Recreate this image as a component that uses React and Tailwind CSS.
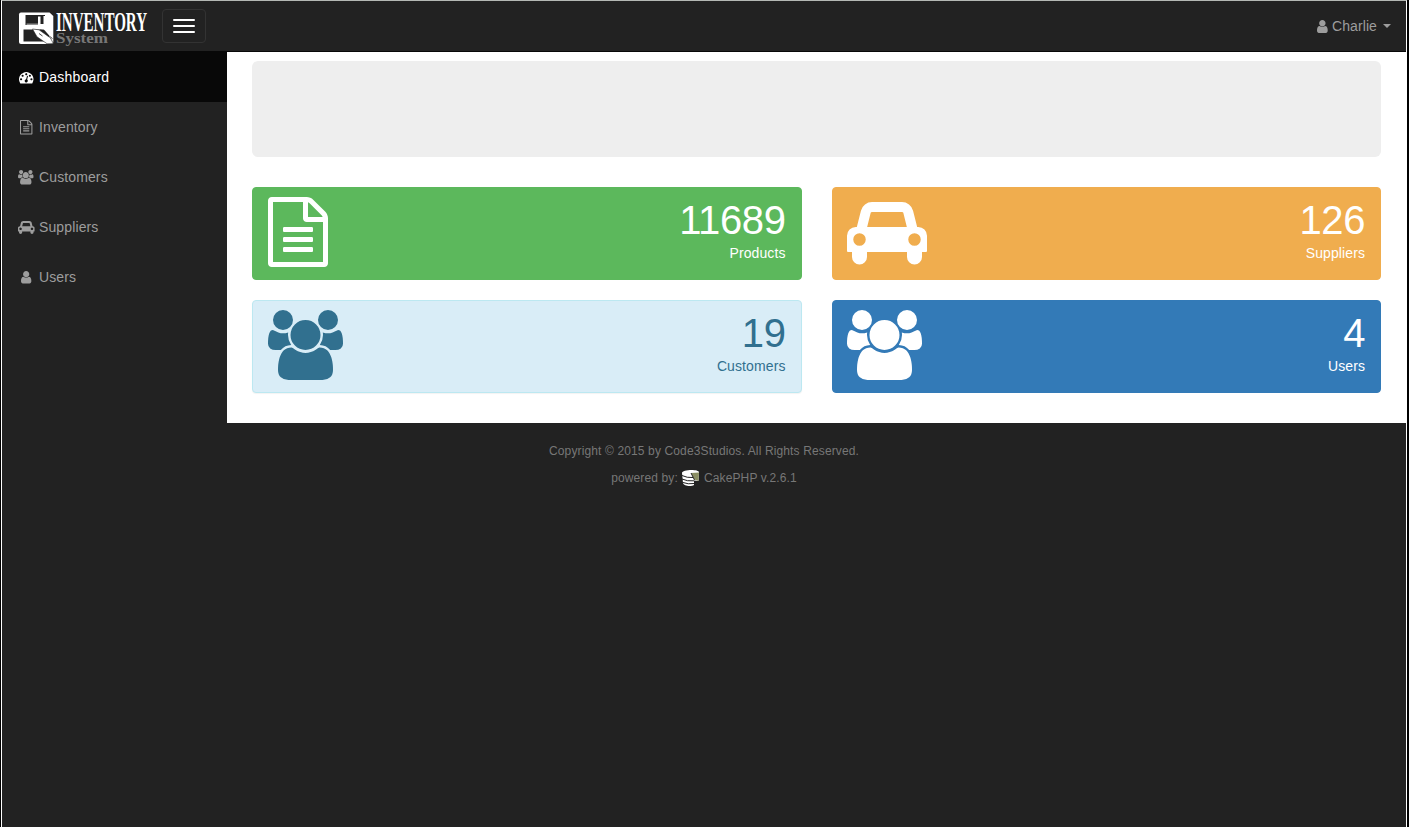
const ICONS = {
  tachometer: {
    w: 1792,
    d: "M384 1152q0-53-37.5-90.5t-90.5-37.5-90.5 37.5-37.5 90.5 37.5 90.5 90.5 37.5 90.5-37.5 37.5-90.5zm192-448q0-53-37.5-90.5t-90.5-37.5-90.5 37.5-37.5 90.5 37.5 90.5 90.5 37.5 90.5-37.5 37.5-90.5zm428 481l101-382q6-26-7.5-48.5t-38.5-29.5-48 6.5-30 39.5l-101 382q-60 5-107 43.5t-63 98.5q-20 77 20 146t117 89 146-20 89-117q16-60-6-117t-72-91zm660-33q0-53-37.5-90.5t-90.5-37.5-90.5 37.5-37.5 90.5 37.5 90.5 90.5 37.5 90.5-37.5 37.5-90.5zm-640-640q0-53-37.5-90.5t-90.5-37.5-90.5 37.5-37.5 90.5 37.5 90.5 90.5 37.5 90.5-37.5 37.5-90.5zm448 192q0-53-37.5-90.5t-90.5-37.5-90.5 37.5-37.5 90.5 37.5 90.5 90.5 37.5 90.5-37.5 37.5-90.5zm320 448q0 261-141 483-19 29-54 29h-1402q-35 0-54-29-141-221-141-483 0-182 71-348t191-286 286-191 348-71 348 71 286 191 191 286 71 348z",
  },
  file: {
    w: 1536,
    d: "M1468 380q28 28 48 76t20 88v1152q0 40-28 68t-68 28h-1344q-40 0-68-28t-28-68v-1600q0-40 28-68t68-28h896q40 0 88 20t76 48zm-444-244v376h376q-10-29-22-41l-313-313q-12-12-41-22zm384 1528v-1024h-416q-40 0-68-28t-28-68v-416h-768v1536h1280zm-1024-864q0-14 9-23t23-9h704q14 0 23 9t9 23v64q0 14-9 23t-23 9h-704q-14 0-23-9t-9-23v-64zm736 224q14 0 23 9t9 23v64q0 14-9 23t-23 9h-704q-14 0-23-9t-9-23v-64q0-14 9-23t23-9h704zm0 256q14 0 23 9t9 23v64q0 14-9 23t-23 9h-704q-14 0-23-9t-9-23v-64q0-14 9-23t23-9h704z",
  },
  users: {
    w: 1920,
    d: "M593 896q-162 5-265 128h-134q-82 0-138-40.5t-56-118.5q0-353 124-353 6 0 43.5 21t97.5 42.5 119 21.5q67 0 133-23-5 37-5 66 0 139 81 256zm1071 637q0 120-73 189.5t-194 69.5h-874q-121 0-194-69.5t-73-189.5q0-53 3.5-103.5t14-109 26.5-108.5 43-97.5 62-81 85.5-53.5 111.5-20q10 0 43 21.5t73 48 107 48 135 21.5 135-21.5 107-48 73-48 43-21.5q61 0 111.5 20t85.5 53.5 62 81 43 97.5 26.5 108.5 14 109 3.5 103.5zm-1024-1277q0 106-75 181t-181 75-181-75-75-181 75-181 181-75 181 75 75 181zm704 384q0 159-112.5 271.5t-271.5 112.5-271.5-112.5-112.5-271.5 112.5-271.5 271.5-112.5 271.5 112.5 112.5 271.5zm576 225q0 78-56 118.5t-138 40.5h-134q-103-123-265-128 81-117 81-256 0-29-5-66 66 23 133 23 59 0 119-21.5t97.5-42.5 43.5-21q124 0 124 353zm-128-609q0 106-75 181t-181 75-181-75-75-181 75-181 181-75 181 75 75 181z",
  },
  car: {
    w: 2048,
    d: "M480 1088q0-66-47-113t-113-47-113 47-47 113 47 113 113 47 113-47 47-113zm36-320h1016l-89-357q-2-8-14-17.5t-21-9.5h-768q-9 0-21 9.5t-14 17.5zm1372 320q0-66-47-113t-113-47-113 47-47 113 47 113 113 47 113-47 47-113zm160-96v384q0 14-9 23t-23 9h-96v128q0 80-56 136t-136 56-136-56-56-136v-128h-1024v128q0 80-56 136t-136 56-136-56-56-136v-128h-96q-14 0-23-9t-9-23v-384q0-93 65.5-158.5t158.5-65.5h28l105-419q23-94 104-157.5t179-63.5h768q98 0 179 63.5t104 157.5l105 419h28q93 0 158.5 65.5t65.5 158.5z",
  },
  user: {
    w: 1280,
    d: "M1280 1399q0 109-62.5 187t-150.5 78h-854q-88 0-150.5-78t-62.5-187q0-85 8.5-160.5t31.5-152 58.5-131 94-89 134.5-34.5q131 128 313 128t313-128q76 0 134.5 34.5t94 89 58.5 131 31.5 152 8.5 160.5zm-256-887q0 159-112.5 271.5t-271.5 112.5-271.5-112.5-112.5-271.5 112.5-271.5 271.5-112.5 271.5 112.5 112.5 271.5z",
  },
};

function Icon({ name, className }) {
  const { w, d } = ICONS[name];
  return (
    <svg viewBox={`0 0 ${w} 1792`} className={`w-auto shrink-0 overflow-visible ${className}`} fill="currentColor" fillRule="evenodd" aria-hidden="true">
      <path d={d} />
    </svg>
  );
}

function Logo() {
  return (
    <svg width="132" height="40" viewBox="0 0 132 40" className="shrink-0 overflow-visible">
      <path fill="#fff" d="M3 6.500H31.500L35.300 10V36Q35.300 38 33.300 38H3Q1 38 1 36V8.500Q1 6.500 3 6.500Z" />
      <path fill="#222" d="M7.500 9H27V19H7.500Z" />
      <path fill="#fff" d="M20 10.500H22.500V18.500H8.500V17.800H20Z M25.500 10H27V19H20V18H25.500Z" />
      <path fill="#222" d="M5.500 23.500H31V35.500H5.500Z" />
      <path fill="#fff" stroke="#222" strokeWidth="0.6" d="M14.500 23L21 23.800L32.500 32L35.300 37.500L29 37.700L19 30.800Z" />
      <path fill="#fff" d="M25 22.500H33V31.500Z" />
      <path stroke="#222" strokeWidth="0.8" d="M21 27.500L24.500 30M22.500 23.500L34.500 32.500" />
      <text x="38" y="24.500" fill="#fff" fontFamily="Liberation Serif, serif" fontWeight="700" fontSize="27" textLength="91" lengthAdjust="spacingAndGlyphs">INVENTORY</text>
      <text x="38" y="36.700" fill="#777" fontFamily="Liberation Serif, serif" fontWeight="700" fontSize="15.500" textLength="52" lengthAdjust="spacingAndGlyphs">System</text>
    </svg>
  );
}

function CakeIcon() {
  return (
    <svg width="18" height="18" viewBox="0 0 18 18" className="shrink-0">
      <path fill="#fff" d="M0 4C0 0.500 17 0 17 3.500L16.500 12L12 11.500V16C9 18 1.500 17 1 14Z" />
      <path fill="#8b8f63" d="M9 4L17 3.500L16.500 12L12.500 10.500Z" />
      <path fill="none" stroke="#222" strokeWidth="1" d="M0 6.500Q5 9 11 8.500M0 10Q5 12.500 12 11.800M1 13.500Q6 15.500 12 14.500M9 4L12.500 11" />
    </svg>
  );
}

const NAV = [
  { icon: "tachometer", label: "Dashboard", active: true },
  { icon: "file", label: "Inventory" },
  { icon: "users", label: "Customers" },
  { icon: "car", label: "Suppliers" },
  { icon: "user", label: "Users" },
];

const CARDS = [
  { icon: "file", value: "11689", label: "Products", style: "border-[#5cb85c] bg-[#5cb85c] pl-[15px] text-white" },
  { icon: "car", value: "126", label: "Suppliers", style: "border-[#f0ad4e] bg-[#f0ad4e] pl-3.5 text-white" },
  { icon: "users", value: "19", label: "Customers", style: "border-[#bce8f1] bg-[#d9edf7] pl-[15px] text-[#31708f] shadow-[0_1px_1px_rgba(0,0,0,0.05)]" },
  { icon: "users", value: "4", label: "Users", style: "border-[#337ab7] bg-[#337ab7] pl-3.5 text-white" },
];

export default function App() {
  return (
    <div className="flex h-[827px] w-[1409px] overflow-hidden bg-black pl-px pr-0.5 font-['Liberation_Sans',Arial,sans-serif] text-sm leading-5">
      <div className="flex w-full flex-col border-x border-t border-x-white border-t-[#b4b8b4] bg-[#222]">
        <header className="flex h-[51px] shrink-0 items-center border-b border-[#080808] pl-4 pr-[15px]">
          <Logo />
          <button className="ml-3 flex h-[34px] w-11 flex-col items-center justify-center gap-1 rounded border border-[#333]">
            <span className="h-0.5 w-[22px] rounded-[1px] bg-white" />
            <span className="h-0.5 w-[22px] rounded-[1px] bg-white" />
            <span className="h-0.5 w-[22px] rounded-[1px] bg-white" />
          </button>
          <div className="ml-auto flex items-center text-[#9d9d9d]">
            <Icon name="user" className="mr-1 h-[15px]" />
            <span className="tracking-[0.1px]">Charlie</span>
            <span className="ml-1.5 border-x-4 border-t-4 border-x-transparent border-t-current" />
          </div>
        </header>
        <div className="flex h-[371px] shrink-0">
          <nav className="w-[225px] shrink-0">
            {NAV.map((n) => (
              <a key={n.label} className={`flex h-[50px] items-center pl-[15px] ${n.active ? "bg-[#080808] tracking-[0.2px] text-white" : "tracking-[0.12px] text-[#9d9d9d]"}`}>
                <span className="mr-1 flex w-[18px] justify-center">
                  <Icon name={n.icon} className="h-[14.5px]" />
                </span>
                {n.label}
              </a>
            ))}
          </nav>
          <main className="flex-1 bg-white px-[25px] pt-[9px]">
            <div className="h-24 rounded-md bg-[#eee]" />
            <div className="mt-[30px] grid grid-cols-2 gap-x-[30px] gap-y-5">
              {CARDS.map((c) => (
                <section key={c.label} className={`flex h-[93px] justify-between rounded border pr-[15px] pt-[9px] ${c.style}`}>
                  <Icon name={c.icon} className="h-[70px]" />
                  <div className="text-right">
                    <div className="text-[40px] leading-[46px] tracking-[-0.4px]">{c.value}</div>
                    <div className="tracking-[0.1px]">{c.label}</div>
                  </div>
                </section>
              ))}
            </div>
          </main>
        </div>
        <footer className="flex flex-col items-center pt-5 text-xs tracking-[0.13px] text-[#777]">
          <p className="leading-[17px]">Copyright © 2015 by Code3Studios. All Rights Reserved.</p>
          <p className="mt-[9px] flex items-center leading-[17px]">
            powered by:
            <span className="mx-1"><CakeIcon /></span>
            CakePHP v.2.6.1
          </p>
        </footer>
      </div>
    </div>
  );
}
